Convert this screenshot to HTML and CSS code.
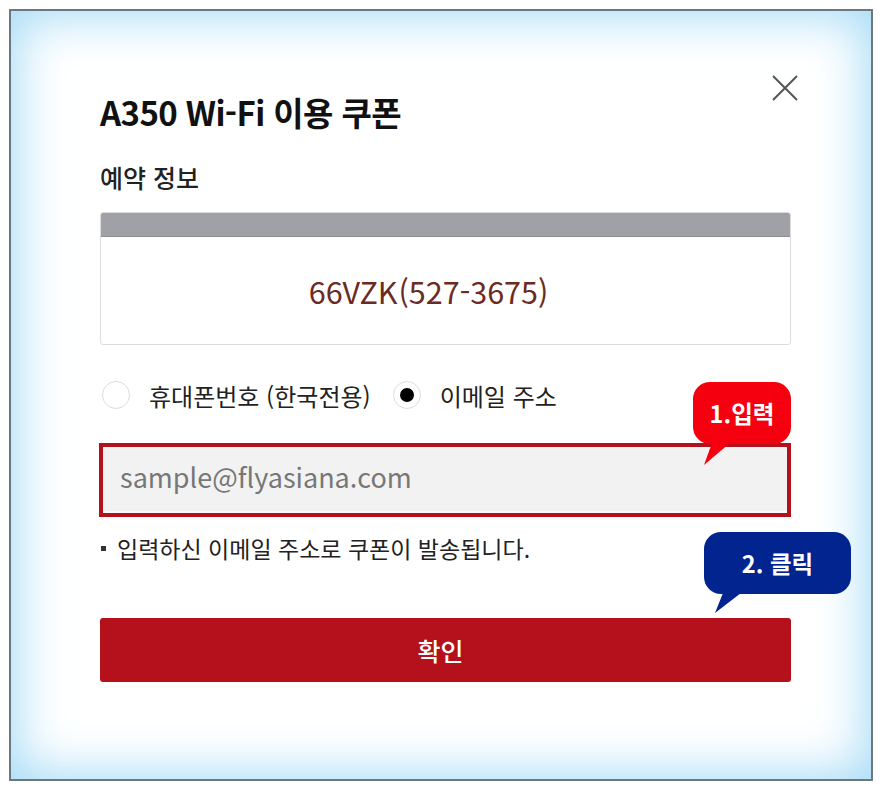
FILE: index.html
```html
<!DOCTYPE html>
<html lang="ko">
<head>
<meta charset="utf-8">
<link rel="stylesheet" href="styles.css">
</head>
<body>
<div class="frame">
  <button class="close" aria-label="닫기">
    <svg width="28" height="28" viewBox="0 0 28 28"><path d="M2 2 L26 26 M26 2 L2 26" stroke="#555" stroke-width="2" fill="none"/></svg>
  </button>
  <h1 class="title">A350 Wi-Fi 이용 쿠폰</h1>
  <h2 class="subtitle">예약 정보</h2>
  <div class="resv">
    <div class="resv-head"></div>
    <div class="resv-body">66VZK<span class="num">(527-3675)</span></div>
  </div>
  <div class="radios">
    <label class="radio"><span class="dot"></span><span>휴대폰번호 (한국전용)</span></label>
    <label class="radio"><span class="dot on"></span><span>이메일 주소</span></label>
  </div>
  <div class="input">sample@flyasiana.com</div>
  <p class="note"><span class="bullet"></span>입력하신 이메일 주소로 쿠폰이 발송됩니다.</p>
  <button class="confirm">확인</button>

  <div class="bubble red">1.입력
    <svg class="tail" width="30" height="24" viewBox="0 0 30 24"><path d="M8 0 L26 0 L0 22 Z" fill="#f5000f"/></svg>
  </div>
  <div class="bubble blue">2. 클릭
    <svg class="tail" width="30" height="24" viewBox="0 0 30 24"><path d="M8 0 L26 0 L0 20 Z" fill="#01248e"/></svg>
  </div>
</div>
</body>
</html>
```
FILE: styles.css
```css
* { box-sizing: border-box; }
html, body { margin: 0; padding: 0; background: #fff; }
body {
  font-family: "Noto Sans CJK KR", "Noto Sans", sans-serif;
  color: #111;
  padding: 9px;
}
.frame {
  position: relative;
  width: 864px;
  height: 772px;
  border: 2px solid #6b7880;
  background: #fff;
  box-shadow: inset 0 0 50px 6px #a5dbf6;
  padding: 79px 80px 0 89px;
}
.close {
  position: absolute;
  top: 63px;
  right: 72px;
  width: 28px;
  height: 28px;
  padding: 0;
  border: 0;
  background: none;
}
.close svg { display: block; }
.title {
  margin: 0;
  font-size: 33px;
  font-weight: 700;
  line-height: 44px;
  letter-spacing: -0.6px;
  color: #111;
}
.subtitle {
  margin: 26px 0 0;
  font-size: 25px;
  font-weight: 500;
  line-height: 34px;
  color: #222;
}
.resv {
  margin-top: 18px;
  border: 1px solid #dcdcdc;
  border-radius: 3px;
  overflow: hidden;
  height: 133px;
  display: flex;
  flex-direction: column;
}
.resv-head {
  height: 24px;
  background: #a0a1a6;
  border-bottom: 1px solid #8e8f94;
}
.resv-body {
  flex: 1;
  display: flex;
  align-items: center;
  justify-content: center;
  font-size: 30.5px;
  color: #6b2a22;
  padding-right: 34px;
}
.resv-body .num { margin-left: 1px; }
.radios {
  margin-top: 33px;
  display: flex;
  align-items: center;
  gap: 20px;
  height: 34px;
}
.radio {
  display: flex;
  align-items: center;
  gap: 19px;
  font-size: 24px;
  color: #222;
  margin-left: 2px;
}
.dot {
  width: 28px;
  height: 28px;
  border-radius: 50%;
  border: 1px solid #dcdcdc;
  background: #fff;
  position: relative;
}
.dot.on::after {
  content: "";
  position: absolute;
  left: 6px;
  top: 6px;
  width: 14px;
  height: 14px;
  border-radius: 50%;
  background: #000;
}
.input {
  margin-top: 31px;
  margin-left: -1px;
  height: 74px;
  border: 4px solid #b3121c;
  background: #f2f2f2;
  box-shadow: inset 0 -2px 0 #fafafa;
  font-size: 27px;
  color: #777;
  display: flex;
  align-items: center;
  padding: 0 0 8px 17px;
}
.note {
  margin: 14px 0 0;
  font-size: 23px;
  line-height: 34px;
  color: #222;
  display: flex;
  align-items: center;
}
.bullet {
  width: 5px;
  height: 5px;
  background: #333;
  margin: 0 11px 0 1px;
}
.confirm {
  display: block;
  margin-top: 53px;
  width: 100%;
  height: 64px;
  border: 0;
  border-radius: 3px;
  background: #b5111c;
  color: #fff;
  font-family: inherit;
  font-size: 25px;
  font-weight: 500;
  padding: 0 10px 0 0;
}
.bubble {
  position: absolute;
  height: 62px;
  border-radius: 17px;
  color: #fff;
  font-size: 23.5px;
  font-weight: 700;
  display: flex;
  align-items: center;
  justify-content: center;
}
.bubble.red {
  left: 682px;
  top: 371px;
  width: 98px;
  background: #f5000f;
}
.bubble.blue {
  left: 693px;
  top: 521px;
  width: 147px;
  background: #01248e;
}
.tail {
  position: absolute;
  left: 11px;
  top: 61px;
}
```
